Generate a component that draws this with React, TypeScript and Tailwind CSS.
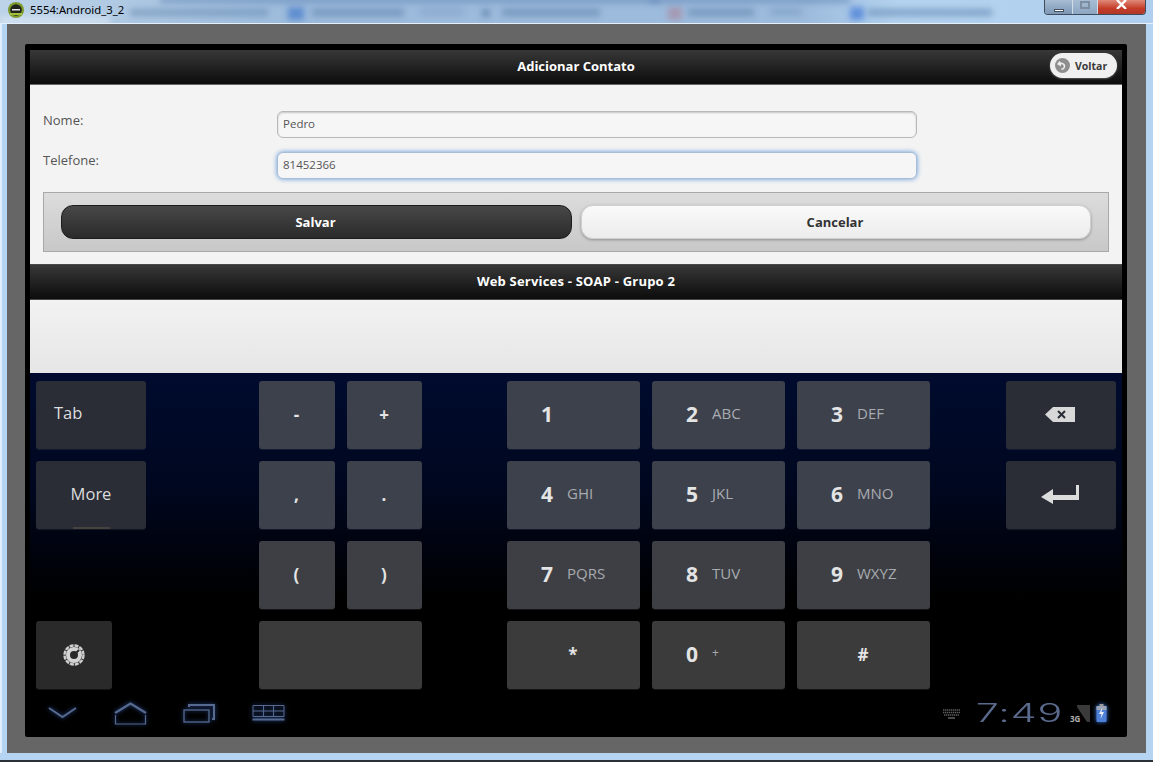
import type { ReactNode } from 'react'

const UI_FONT = 'font-["Open_Sans","Noto_Sans",sans-serif]'

// blurred taskbar tabs that show through the glass title bar
const GLASS_BLOBS = [
  'left-[130px] top-[9px] w-[138px] h-[7px] bg-[#5c7fa8]/50',
  'left-[288px] top-[7px] w-[16px] h-[13px] bg-[#4f82cc]/80',
  'left-[312px] top-[9px] w-[92px] h-[7px] bg-[#4f739f]/50',
  'left-[420px] top-[9px] w-[44px] h-[6px] bg-[#5c7fa8]/30',
  'left-[482px] top-[10px] w-[8px] h-[6px] bg-[#3d5f8f]/60',
  'left-[502px] top-[9px] w-[98px] h-[7px] bg-[#4f739f]/50',
  'left-[668px] top-[7px] w-[14px] h-[13px] bg-[#b0788c]/50',
  'left-[688px] top-[9px] w-[66px] h-[7px] bg-[#4f739f]/50',
  'left-[770px] top-[9px] w-[32px] h-[6px] bg-[#4f739f]/30',
  'left-[850px] top-[7px] w-[14px] h-[13px] bg-[#4f82d8]/80',
  'left-[868px] top-[9px] w-[124px] h-[7px] bg-[#4f739f]/50',
  'left-[160px] top-[-3px] w-[500px] h-[6px] bg-[#5f84b4]/60',
  'left-[650px] top-[-3px] w-[200px] h-[6px] bg-[#5f84b4]/60',
  'left-[0px] top-[16px] w-[110px] h-[10px] bg-[#d8e6f4]/70',
]

function Key({ children, tone = 'light', className = '' }: { children?: ReactNode; tone?: string; className?: string }) {
  const bg = tone === 'dark' ? 'bg-[#2a2d36]' : 'bg-[#3d414c]'
  return (
    <div className={`relative h-[68px] rounded-[3px] flex items-center shadow-[0_1px_0_rgba(255,255,255,0.08)] ${bg} ${className}`}>
      {children}
    </div>
  )
}

function Sym({ label, className = '' }: { label: string; className?: string }) {
  return (
    <Key className={`justify-center pr-[1px] text-[17px] font-bold text-[#e4e4e4] ${className}`}>
      {label}
    </Key>
  )
}

function Num({ n, sub, className = '', subCls = 'text-[15px]' }: { n: string; sub?: string; className?: string; subCls?: string }) {
  return (
    <Key className={`pl-[34px] pb-[1px] ${className}`}>
      <span className="w-[26px] text-[21px] font-bold text-[#e4e4e4]">{n}</span>
      {sub && <span className={`mb-[3px] text-[#a8abb0] ${subCls}`}>{sub}</span>}
    </Key>
  )
}

function NavIcons() {
  const glow = 'drop-shadow-[0_0_2px_#2a4a90]'
  return (
    <div className="flex items-center pl-[18px] text-[#566a90]">
      <svg className={`w-[29px] h-[14px] ${glow}`} viewBox="0 0 29 14" fill="none" stroke="currentColor" strokeWidth="2">
        <path d="M1 2l13.5 9L28 2" />
      </svg>
      <svg className={`ml-[37px] w-[33px] h-[23px] ${glow}`} viewBox="0 0 33 23" fill="none" stroke="currentColor">
        <path d="M1 11L16.5 1.5 32 11" strokeWidth="2.2" />
        <path d="M1.5 13v9h30v-9" strokeWidth="1.2" />
      </svg>
      <svg className={`ml-[36px] w-[32px] h-[20px] ${glow}`} viewBox="0 0 32 20" fill="none" stroke="currentColor" strokeWidth="1.3">
        <rect x="1" y="7" width="25" height="12" />
        <path d="M6 4V2h25v14h-2" strokeWidth="2" />
      </svg>
      <svg className={`ml-[37px] w-[33px] h-[18px] ${glow}`} viewBox="0 0 33 18" fill="none" stroke="currentColor" strokeWidth="1">
        <path d="M1 1.5h31v11H1zM1 7h31M11.5 1.5v11M21.5 1.5v11" />
        <path d="M0.5 15.5h32" strokeWidth="2.2" />
      </svg>
    </div>
  )
}

function StatusIcons() {
  return (
    <div className="flex items-center pr-[15px]">
      <svg className="w-[17px] h-[10px] mt-[1px]" viewBox="0 0 17 10" fill="none" stroke="#5c5c5c" strokeWidth="1.6" strokeDasharray="1.4 0.6">
        <path d="M0 1h17M0 3.5h17M1 6h15" />
        <path d="M5 9h7" strokeDasharray="none" />
      </svg>
      {/* clock uses a wide thin face on the device, stretched text gets close */}
      <span className="ml-[17px] w-[85px] flex justify-center">
        <span className='inline-block font-["Inter",sans-serif] font-light text-[25px] leading-none text-[#5a6a8c] scale-x-[1.65] origin-center tracking-[0.5px]'>
          7:49
        </span>
      </span>
      <span className="relative ml-[8px] w-[20px] h-[17px]">
        <svg className="absolute inset-0 w-full h-full" viewBox="0 0 20 17">
          <path d="M7 0h13v17h-3L7 2z" fill="#3a3a3a" />
        </svg>
        <span className="absolute left-0 bottom-[-1px] text-[8px] font-bold leading-none text-[#b0b0b0]">3G</span>
      </span>
      <svg className="ml-[6px] w-[11px] h-[18px] drop-shadow-[0_0_2px_#3d7be0]" viewBox="0 0 11 18">
        <rect x="3.5" y="0" width="4" height="2" fill="#9a9a9a" />
        <rect x="0.5" y="2" width="10" height="16" rx="1" fill="#4f80d8" />
        <rect x="0.5" y="2" width="10" height="4" fill="#9aa4b4" />
        <path d="M6.5 3L3 10h2.5L4.5 15 8 8H5.5z" fill="#e8eef8" />
      </svg>
    </div>
  )
}

export default function App() {
  return (
    <div className={`relative w-[1153px] h-[762px] overflow-hidden flex flex-col bg-[#b4d4f2] shadow-[inset_2px_0_0_#e0eefb] ${UI_FONT}`}>
      {/* ── Title bar ─────────────────────────────────────────────── */}
      <div className="relative h-[24px] shrink-0 overflow-hidden border-b border-[#e4f0fb] bg-[linear-gradient(90deg,#bcd3e8_0%,#9dbbdc_25%,#9dbbdc_70%,#b4d3f0_78%,#b0cfee_100%)]">
        {GLASS_BLOBS.map(cls => (
          <div key={cls} className={`absolute blur-[3px] ${cls}`} />
        ))}
        <div className="relative flex items-center h-[20px] pl-[8px]">
          <svg className="w-[16px] h-[16px]" viewBox="0 0 16 16">
            <circle cx="8" cy="8" r="8" fill="#7e9a2c" />
            <circle cx="8" cy="8" r="5.8" fill="#20241c" />
            <rect x="2" y="11" width="12" height="2" fill="#a3c13c" />
            <rect x="4" y="7" width="8" height="1.5" fill="#e8e8e8" />
          </svg>
          <span className='ml-[6px] font-["Noto_Sans",sans-serif] text-[11.3px] text-black'>5554:Android_3_2</span>
        </div>
        <div className="absolute right-[7px] top-0 flex h-[15px] w-[102px] overflow-hidden rounded-b-[4px] border border-t-0 border-[#3f4a5c]">
          <div className="w-[28px] flex items-end justify-center pb-[2px] border-r border-[#d0dce8] bg-[linear-gradient(#a8bdd4,#7c96b4)]">
            <div className="w-[10px] h-[3px] bg-white border border-[#45505e]" />
          </div>
          <div className="w-[25px] flex items-start justify-center pt-[1px] border-r border-[#d0dce8] bg-[linear-gradient(#a8bdd4,#8ca6c2)]">
            <div className="w-[10px] h-[8px] border-2 border-[#7e8ea2]" />
          </div>
          <div className="flex-1 flex items-start justify-center bg-[linear-gradient(#e08a78,#c43c28_60%,#b03828)]">
            <svg className="w-[11px] h-[9px]" viewBox="0 0 11 9" fill="none" stroke="#fff" strokeWidth="2.4">
              <path d="M1 0l9 9M10 0L1 9" />
            </svg>
          </div>
        </div>
      </div>

      {/* ── Emulator frame ────────────────────────────────────────── */}
      <div className="mx-[7px] h-[729px] shrink-0 bg-[#666666] pl-[18px] pr-[19px] pt-[20px] pb-[16px]">
        <div className="h-full bg-black rounded-[2px] px-[5px] pt-[6px] flex flex-col">

          {/* header */}
          <div className="relative h-[35px] shrink-0 flex items-center justify-center border-b border-[#666] bg-[linear-gradient(#383838,#0c0c0c)]">
            <span className="text-[13px] font-bold text-white">Adicionar Contato</span>
            <div className="absolute right-[5px] top-[3px] h-[25px] w-[67px] flex items-center gap-[5px] pl-[5px] rounded-full bg-[#f0f0f0] shadow-[0_1px_2px_rgba(255,255,255,0.3)]">
              <svg className="w-[15px] h-[15px]" viewBox="0 0 15 15">
                <circle cx="7.5" cy="7.5" r="7.5" fill="#8e8e8e" />
                <path d="M5 3.5L3.2 6 6 7.5M3.8 6c3-1.5 6.5 0 5.5 3.2-.5 1.4-1.6 2-3 2" fill="none" stroke="#eee" strokeWidth="1.5" />
              </svg>
              <span className="mt-[2px] text-[10.5px] font-bold text-[#3a3a3a]">Voltar</span>
            </div>
          </div>

          {/* form */}
          <div className="h-[179px] shrink-0 bg-[#f3f3f3] pt-[26px] px-[13px]">
            <div className="flex h-[27px] mb-[14px]">
              <label className="w-[234px] text-[13px] text-[#555] leading-[18px]">Nome:</label>
              <div className="w-[640px] h-[27px] flex items-center pl-[5px] pb-[1px] rounded-[6px] border border-[#b8b8b8] bg-[#f6f6f6] shadow-[inset_0_1px_2px_rgba(0,0,0,0.2)] text-[11.5px] text-[#555]">
                Pedro
              </div>
            </div>
            <div className="flex h-[27px]">
              <label className="w-[234px] text-[13px] text-[#555] leading-[16px]">Telefone:</label>
              <div className="w-[640px] h-[27px] flex items-center pl-[5px] pb-[1px] rounded-[6px] border border-[#a8bdd8] bg-[#f6f6f6] shadow-[0_0_5px_#5f98d8] text-[11.5px] text-[#555]">
                81452366
              </div>
            </div>
            <div className="mt-[13px] h-[60px] w-[1066px] flex items-center gap-[9px] px-[17px] border border-[#a8a8a8] bg-[linear-gradient(#dcdcdc,#c8c8c8)]">
              <button className="w-[511px] h-[34px] pt-[1px] pr-[2px] rounded-[12px] border border-[#1c1c1c] bg-[linear-gradient(#484848,#2a2a2a)] text-[13px] font-bold text-white">
                Salvar
              </button>
              <button className="w-[510px] h-[34px] pt-[1px] pr-[2px] rounded-[12px] border border-[#d0d0d0] bg-[linear-gradient(#fafafa,#ececec)] shadow-[0_1px_3px_rgba(0,0,0,0.3)] text-[13px] font-bold text-[#333]">
                Cancelar
              </button>
            </div>
          </div>

          {/* footer */}
          <div className="h-[36px] shrink-0 pb-[1px] flex items-center justify-center border-y border-[#4a4a4a] bg-[linear-gradient(#383838,#0c0c0c)]">
            <span className="text-[13px] font-bold tracking-[0.2px] text-white">Web Services - SOAP - Grupo 2</span>
          </div>

          <div className="h-[73px] shrink-0 bg-[linear-gradient(#f2f2f2,#e6e6e6)]" />

          {/* ── Soft keyboard ─────────────────────────────────────── */}
          <div className="flex-1 flex flex-col bg-[linear-gradient(#000b2e_0%,#00071f_32%,#000000_62%)]">
            <div className="flex pl-[6px] pt-[8px]">
              <div className="w-[110px] flex flex-col gap-[12px]">
                <Key tone="dark" className="pl-[18px] pb-[3px] text-[16.5px] text-[#dddddd]">Tab</Key>
                <Key tone="dark" className="justify-center pb-[2px] text-[16.5px] text-[#dddddd]">
                  More
                  <span className="absolute bottom-0 left-[37px] w-[37px] h-[2px] bg-[#45433e]" />
                </Key>
                <div className="h-[68px]" />
                <Key className="w-[76px] justify-center bg-[#2a2a2a]!">
                  <svg className="w-[22px] h-[22px]" viewBox="0 0 22 22" fill="none">
                    <circle cx="11" cy="11" r="9.5" stroke="#cfcfcf" strokeWidth="2.4" strokeDasharray="4 1" />
                    <circle cx="11" cy="11" r="6" stroke="#d4d4d4" strokeWidth="4" />
                    <path d="M11 11l5-5" stroke="#2a2a2a" strokeWidth="2" />
                  </svg>
                </Key>
              </div>

              <div className="ml-[113px] grid grid-cols-[76px_75px] gap-x-[12px] gap-y-[12px]">
                <Sym label="-" />
                <Sym label="+" />
                <Sym label="," />
                <Sym label="." />
                <Sym label="(" className="bg-[#3d3f44]!" />
                <Sym label=")" className="bg-[#3d3f44]!" />
                <Key className="col-span-2 bg-[#3b3b3b]!" />
              </div>

              <div className="ml-[85px] grid grid-cols-[133px_133px_133px] gap-x-[12px] gap-y-[12px]">
                <Num n="1" />
                <Num n="2" sub="ABC" />
                <Num n="3" sub="DEF" />
                <Num n="4" sub="GHI" />
                <Num n="5" sub="JKL" />
                <Num n="6" sub="MNO" />
                <Num n="7" sub="PQRS" className="bg-[#3d3f44]!" />
                <Num n="8" sub="TUV" className="bg-[#3d3f44]!" />
                <Num n="9" sub="WXYZ" className="bg-[#3d3f44]!" />
                <Sym label="*" className="bg-[#3b3b3b]!" />
                <Num n="0" sub="+" className="bg-[#3b3b3b]!" subCls="text-[12px]" />
                <Sym label="#" className="bg-[#3b3b3b]!" />
              </div>

              <div className="ml-[76px] w-[110px] flex flex-col gap-[12px]">
                <Key tone="dark" className="justify-center pr-[3px] pb-[1px]">
                  <svg className="w-[30px] h-[15px]" viewBox="0 0 30 15">
                    <path d="M8 0h22v15H8L0 7.5z" fill="#d8d8d8" />
                    <path d="M13 4l7 7M20 4l-7 7" stroke="#2a2d36" strokeWidth="2" />
                  </svg>
                </Key>
                <Key tone="dark" className="justify-center pr-[3px] pb-[1px]">
                  <svg className="w-[38px] h-[19px]" viewBox="0 0 38 19">
                    <path d="M0 12L12 4v6h23V0h3v15H12v4z" fill="#dcdcdc" />
                  </svg>
                </Key>
              </div>
            </div>

            <div className="flex-1 flex items-center justify-between">
              <NavIcons />
              <StatusIcons />
            </div>
          </div>
        </div>
      </div>

      <div className="flex-1 border-b-2 border-[#2a3038] bg-[#b4d4f2]" />
    </div>
  )
}
